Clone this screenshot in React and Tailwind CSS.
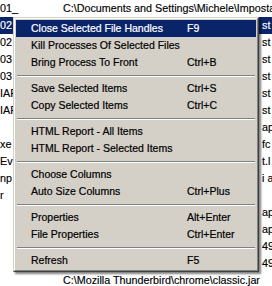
import React from 'react';

const rows = [
  { a: '01_', b: 'C:\\Documents and Settings\\Michele\\Impostazioni locali', full: true },
  { a: '02', t: 'st', sel: true },
  { a: '02', t: 'st' },
  { a: '03', t: 'st' },
  { a: '03', t: 'st' },
  { a: 'IAF', t: 'st' },
  { a: 'IAF', t: 'st' },
  { a: '', t: 'ap' },
  { a: 'xe', t: 'fc' },
  { a: 'Ev', t: 't.l' },
  { a: 'np', t: 'i a' },
  { a: 'r', t: '' },
  { a: '', t: 'ap' },
  { a: '', t: 'ap' },
  { a: '', t: '49' },
  { a: '', t: '49' },
  { a: '', b: 'C:\\Mozilla Thunderbird\\chrome\\classic.jar', full: true },
];

const menu = [
  { label: 'Close Selected File Handles', key: 'F9', active: true },
  { label: 'Kill Processes Of Selected Files' },
  { label: 'Bring Process To Front', key: 'Ctrl+B' },
  'sep',
  { label: 'Save Selected Items', key: 'Ctrl+S' },
  { label: 'Copy Selected Items', key: 'Ctrl+C' },
  'sep',
  { label: 'HTML Report - All Items' },
  { label: 'HTML Report - Selected Items' },
  'sep',
  { label: 'Choose Columns' },
  { label: 'Auto Size Columns', key: 'Ctrl+Plus' },
  'sep',
  { label: 'Properties', key: 'Alt+Enter' },
  { label: 'File Properties', key: 'Ctrl+Enter' },
  'sep',
  { label: 'Refresh', key: 'F5' },
];

function ContextMenu() {
  return (
    <div className="absolute left-[13px] top-[17px] w-[246px] h-[255px] border border-t-[#d4d0c8] border-l-[#d4d0c8] border-r-[#404040] border-b-[#404040] shadow-[2px_2px_2px_rgba(0,0,0,0.5)]">
      <div className="h-full border border-t-white border-l-white border-r-[#808080] border-b-[#808080] bg-[#d4d0c8] p-px font-['Liberation_Sans',Arial,sans-serif] text-[10.5px] text-black [-webkit-text-stroke:0.2px_currentColor]">
        {menu.map((item, i) =>
          item === 'sep' ? (
            <div key={i} className="h-[9px] flex flex-col justify-center px-px">
              <div className="h-px bg-[#808080]" />
              <div className="h-px bg-white" />
            </div>
          ) : (
            <div
              key={i}
              className={`flex h-[17px] items-center pl-[15px] whitespace-nowrap ${item.active ? 'bg-[#0a246a] text-white' : ''}`}
            >
              <span className="w-[156px] shrink-0">{item.label}</span>
              <span>{item.key}</span>
            </div>
          )
        )}
      </div>
    </div>
  );
}

export default function App() {
  return (
    <div className="relative w-[272px] h-[286px] overflow-hidden bg-white font-['Liberation_Sans',Arial,sans-serif] text-[10.75px] text-black [-webkit-text-stroke:0.15px_currentColor]">
      <div className="flex flex-col">
        {rows.map((r, i) => (
          <div
            key={i}
            className={`flex h-[17px] shrink-0 items-center whitespace-nowrap ${r.sel ? 'bg-[#0a246a] text-white' : ''}`}
          >
            <span className="w-[63px] shrink-0 overflow-hidden">{r.a}</span>
            {r.full ? (
              <span>{r.b}</span>
            ) : (
              <>
                <span className="w-[199px] shrink-0" />
                <span>{r.t}</span>
              </>
            )}
          </div>
        ))}
      </div>
      <ContextMenu />
    </div>
  );
}
